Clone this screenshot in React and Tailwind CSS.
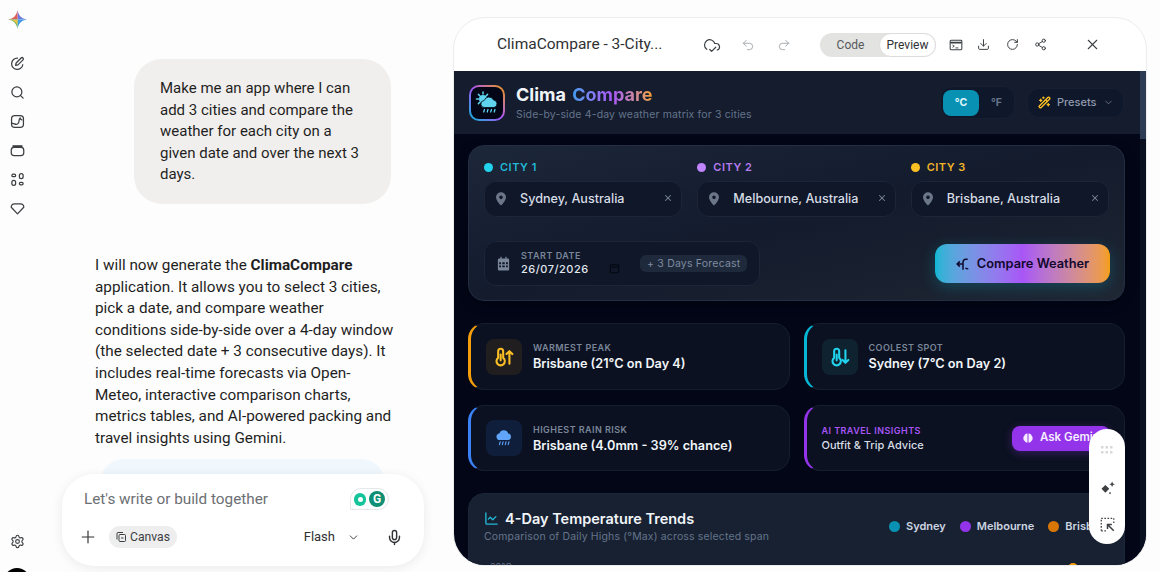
import { CloudCheck, Undo2, Redo2, Download, RotateCw, Share2, X, ChevronDown, Plus, Mic, Settings, Search, ChartLine, WandSparkles } from "lucide-react"

const Pin = ({ className }) => (
  <svg viewBox="0 0 24 24" className={className} fill="currentColor">
    <path fillRule="evenodd" d="M12 2a7.500 7.500 0 0 0-7.500 7.500C4.500 14.800 12 22 12 22s7.500-7.200 7.500-12.500A7.500 7.500 0 0 0 12 2zm0 10.200a2.700 2.700 0 1 1 0-5.400 2.700 2.700 0 0 1 0 5.400z" />
  </svg>
)

const RainCloud = ({ className }) => (
  <svg viewBox="0 0 24 24" className={className} fill="currentColor">
    <path d="M7 14.500a4 4 0 0 1-.5-7.970A5.500 5.500 0 0 1 17 6.600a4 4 0 0 1 0 7.900z" />
    <path d="M7.500 16.500 6.500 20M11 16.500 10 20M14.500 16.500 13.500 20M18 16.500 17 20" stroke="currentColor" strokeWidth="1.300" strokeLinecap="round" fill="none" />
  </svg>
)

const SunCloud = ({ className }) => (
  <svg viewBox="0 0 24 24" className={className} fill="currentColor">
    <circle cx="8" cy="8" r="4" />
    <path d="M8 1v2M1.500 8h2M3.400 3.400l1.400 1.400M12.600 3.400l-1.400 1.400M3.400 12.600l1.400-1.400" stroke="currentColor" strokeWidth="1.500" strokeLinecap="round" />
    <path d="M9.500 16.500a3.500 3.500 0 0 1-.3-7A5 5 0 0 1 18.500 9a3.800 3.800 0 0 1 .5 7.500z" stroke="#020617" strokeWidth="0.800" />
    <path d="M9.500 18.500 8.700 21M13 18.500 12.200 21M16.500 18.500 15.700 21M20 18.500 19.200 21" stroke="currentColor" strokeWidth="1.300" strokeLinecap="round" fill="none" />
  </svg>
)

const ThermoArrow = ({ className, down }) => (
  <svg viewBox="0 0 24 24" className={className} fill="none" stroke="currentColor" strokeWidth="2.500" strokeLinecap="round" strokeLinejoin="round">
    <path d="M5 5a3 3 0 0 1 6 0v8a5 5 0 1 1-6 0z" />
    <path d="M8 9v7" />
    {down ? <path d="M18.500 4v15M15 15.500l3.500 3.500 3.500-3.500" /> : <path d="M18.500 20V5M15 8.500 18.500 5 22 8.500" />}
  </svg>
)

const Brain = ({ className }) => (
  <svg viewBox="0 0 24 24" className={className} fill="currentColor">
    <path d="M11 3v18c-3 .500-5-1-5.500-3C3.500 17 2.500 15 3 13c-.800-2 0-4 1.500-5C5 5 8 2.500 11 3zM13 3c3-.500 6 2 6.500 5 1.500 1 2.300 3 1.500 5 .500 2-.500 4-2.500 5-.500 2-2.500 3.500-5.500 3z" />
  </svg>
)

const StatCard = ({ border, iconBg, icon, label, value }) => (
  <div className={`h-full rounded-2xl border border-l-[3px] border-[#161d2e] ${border} bg-[#0b1120] flex items-center pl-[15px] gap-[11px]`}>
    <div className={`w-9 h-9 rounded-lg flex items-center justify-center ${iconBg}`}>{icon}</div>
    <div className="pt-[1px]">
      <div className="text-[9px] leading-[14px] font-semibold tracking-[0.45px] text-[#7a8699]">{label}</div>
      <div className="text-[12.700px] leading-[18px] font-semibold text-[#f1f5f9]">{value}</div>
    </div>
  </div>
)

const CityField = ({ label, dot, labelColor, city }) => (
  <div>
    <div className="flex items-center gap-[7px] h-[14px] mb-[7px]">
      <span className={`w-[9px] h-[9px] rounded-full ${dot}`} />
      <span className={`text-[11px] font-semibold tracking-[0.5px] ${labelColor}`}>{label}</span>
    </div>
    <div className="h-9 rounded-xl border border-[#1c2638] bg-[#0f1728] flex items-center pl-[8px] pr-[8px]">
      <Pin className="w-4 h-4 text-[#6b7688]" />
      <span className="ml-[11px] pt-[1px] text-[12.600px] font-medium text-[#d7dde6] flex-1">{city}</span>
      <X className="w-[10px] h-[10px] text-[#7a8699] -mt-[3px]" strokeWidth={2.500} />
    </div>
  </div>
)

const SideIcon = ({ children }) => (
  <div className="h-[29px] flex items-center justify-center text-[#3c3e41]">{children}</div>
)

export default function App() {
  return (
    <div className="w-[1160px] h-[572px] overflow-hidden flex bg-[#fdfdfd] font-['Inter',sans-serif]">
      {/* nav rail */}
      <div className="w-[34px] shrink-0 flex flex-col items-center pt-[10px]">
        <svg viewBox="0 0 24 24" className="w-[19px] h-[19px]">
          <path d="M12 0c1 6.500 5 11 12 12H12z" fill="#6f79dc" />
          <path d="M12 0c-1 6.500-5 11-12 12h12z" fill="#dd5f5c" />
          <path d="M24 12c-7 1-11 5.500-12 12V12z" fill="#3f9de8" />
          <path d="M0 12c7 1 11 5.500 12 12V12z" fill="#6fbb5e" />
          <path d="M5 12.500h7V19c-1.500-2.800-3.500-5-7-6.500z" fill="#e8c240" />
        </svg>
        <div className="mt-[20px] flex flex-col">
          <SideIcon>
            <svg viewBox="0 0 24 24" className="w-[15px] h-[15px]" fill="none" stroke="currentColor" strokeWidth="2" strokeLinecap="round" strokeLinejoin="round">
              <path d="M12 3.500a9 9 0 1 0 8.500 10.500" />
              <path d="M9 15l.8-3.800 8-8a2.100 2.100 0 0 1 3 3l-8 8z" />
            </svg>
          </SideIcon>
          <SideIcon><Search className="w-[15px] h-[15px]" strokeWidth={2} /></SideIcon>
          <SideIcon>
            <svg viewBox="0 0 24 24" className="w-[15px] h-[15px]" fill="none" stroke="currentColor" strokeWidth="2" strokeLinecap="round">
              <rect x="2.500" y="2.500" width="19" height="19" rx="5" />
              <path d="M3 15c4-1 5 3 9 1 4-2 1-6 4-9.500 1 3 3 3 3 3" />
            </svg>
          </SideIcon>
          <SideIcon>
            <svg viewBox="0 0 24 24" className="w-[15px] h-[15px]" fill="none" stroke="currentColor" strokeWidth="2">
              <rect x="2" y="7" width="20" height="13" rx="4.500" />
              <path d="M5 7V4.500h14V7z" fill="currentColor" />
            </svg>
          </SideIcon>
          <SideIcon>
            <svg viewBox="0 0 24 24" className="w-[15px] h-[15px]" fill="none" stroke="currentColor" strokeWidth="2">
              <rect x="3" y="3.500" width="6" height="4" rx="2" />
              <rect x="15" y="2.500" width="6" height="8" rx="3" />
              <rect x="3" y="13.500" width="6" height="8" rx="3" />
              <rect x="15" y="16.500" width="6" height="4" rx="2" />
            </svg>
          </SideIcon>
          <SideIcon>
            <svg viewBox="0 0 24 24" className="w-[15px] h-[15px]" fill="none" stroke="currentColor" strokeWidth="2" strokeLinejoin="round">
              <path d="M7 4.500h10c3 0 5.500 3 5 5.500L12 20.500 2 10c-.500-2.500 2-5.500 5-5.500z" />
            </svg>
          </SideIcon>
        </div>
        <div className="mt-auto flex flex-col items-center">
          <Settings className="w-[15px] h-[15px] text-[#3c3e41]" strokeWidth={1.800} />
          <div className="w-[26px] h-[26px] rounded-full bg-black mt-[19px] -mb-[22px]" />
        </div>
      </div>

      {/* chat column */}
      <div className="w-[419px] shrink-0 flex flex-col font-['Roboto',sans-serif] text-[#1f1f1f]">
        <div className="h-[474px] overflow-hidden pt-[59px] pl-[61px]">
          <div className="ml-[39px] w-[257px] h-[145px] rounded-[28px] bg-[#f1efed] pl-[26px] pr-[24px] pt-[19px] text-[15px] leading-[21.6px]">
            Make me an app where I can add 3 cities and compare the weather for each city on a given date and over the next 3 days.
          </div>
          <div className="mt-[51px] w-[310px] text-[15.300px] leading-[21.6px]">
            I will now generate the <b className="font-bold">ClimaCompare</b><br />
            application. It allows you to select 3 cities,<br />
            pick a date, and compare weather<br />
            conditions side-by-side over a 4-day window<br />
            (the selected date + 3 consecutive days). It<br />
            includes real-time forecasts via Open-<br />
            Meteo, interactive comparison charts,<br />
            metrics tables, and AI-powered packing and<br />
            travel insights using Gemini.
          </div>
          <div className="mt-[10px] ml-[5px] w-[285px] h-10 rounded-t-[24px] bg-[#f0f7fd]" />
        </div>
        <div className="ml-[28px] w-[362px] h-[92px] rounded-[32px] bg-white shadow-[0_2px_12px_rgba(0,0,0,0.08)] relative flex flex-col">
          <div className="h-[50px] flex items-center pl-[22px] text-[15.300px] text-[#6c6f73]">Let's write or build together</div>
          <div className="absolute left-[288px] top-[14px] w-[39px] h-[22px] rounded-[11px] rounded-bl-none border border-[#e4e8e8] bg-white flex items-center justify-center gap-[3px]">
            <span className="w-[12px] h-[13px] rounded-full bg-[#15c39a] flex items-center justify-center"><span className="w-[5px] h-[5px] rounded-full bg-white" /></span>
            <span className="w-[16px] h-[16px] rounded-full bg-[#0f8f73] flex items-center justify-center text-white text-[12px] font-bold leading-none">G</span>
          </div>
          <div className="flex-1 flex items-center pl-[16px] pr-[21px] pb-[16px]">
            <Plus className="w-[20px] h-[20px] text-[#2f3133]" strokeWidth={1.400} />
            <div className="ml-[11px] h-[22px] pl-[6px] pr-[7px] rounded-full bg-[#eeeeee] flex items-center gap-[3px] text-[12.200px] text-[#3c4043]">
              <svg viewBox="0 0 24 24" className="w-[12px] h-[12px]" fill="none" stroke="currentColor" strokeWidth="2">
                <path d="M4 17V5a2 2 0 0 1 2-2h10" />
                <rect x="8" y="7" width="13" height="14" rx="2" />
                <path d="M12 14h5" />
              </svg>
              Canvas
            </div>
            <span className="ml-auto text-[13px] text-[#2f3133]">Flash</span>
            <ChevronDown className="ml-[12px] w-[13px] h-[13px] text-[#3c4043]" strokeWidth={1.800} />
            <Mic className="ml-[26px] w-[17px] h-[17px] text-[#2f3133]" strokeWidth={2} />
          </div>
        </div>
      </div>

      {/* canvas panel */}
      <div className="w-[694px] h-[549px] mt-[17px] relative">
        <div className="w-full h-full rounded-[32px] border border-[#ececec] bg-white overflow-hidden flex flex-col">
          <div className="h-[53px] shrink-0 flex items-center text-[#3c4043] pl-[43px]">
            <span className="text-[15.500px] font-['Roboto',sans-serif] text-[#2f3133] w-[191px]">ClimaCompare - 3-City...</span>
            <CloudCheck className="ml-[15px] w-[18px] h-[18px]" strokeWidth={1.600} />
            <Undo2 className="ml-[20px] w-[14px] h-[14px] text-[#a3a6aa]" strokeWidth={1.600} />
            <Redo2 className="ml-[22px] w-[14px] h-[14px] text-[#a3a6aa]" strokeWidth={1.600} />
            <div className="ml-[29px] w-[116px] h-[24px] rounded-full bg-[#e3e3e1] flex items-center text-[12px] font-['Roboto',sans-serif]">
              <span className="w-[59px] text-center text-[#55585c] pl-[2px]">Code</span>
              <span className="w-[57px] h-[24px] rounded-full bg-white border border-[#dcdcdc] flex items-center justify-center text-[#2f3133]">Preview</span>
            </div>
            <svg viewBox="0 0 24 24" className="ml-[13px] w-[14px] h-[14px]" fill="none" stroke="currentColor" strokeWidth="1.800">
              <rect x="2" y="4" width="20" height="16" rx="1.500" />
              <path d="M2 8h20" strokeWidth="3" />
              <path d="M6 12l3 2-3 2M11 17h5" strokeWidth="1.600" />
            </svg>
            <Download className="ml-[14px] w-[13px] h-[13px]" strokeWidth={1.800} />
            <RotateCw className="ml-[16px] w-[13px] h-[13px]" strokeWidth={1.800} />
            <Share2 className="ml-[15px] w-[13px] h-[13px]" strokeWidth={1.800} />
            <X className="ml-[37px] w-[17px] h-[17px]" strokeWidth={1.500} />
          </div>

          {/* preview */}
          <div className="flex-1 min-h-0 flex bg-[#020617] overflow-hidden">
            <div className="flex-1 min-w-0">
              <div className="h-[63px] bg-[#141c2e] flex items-center pl-[15px] pr-[16px]">
                <div className="w-9 h-9 rounded-[10px] p-[2px] bg-[linear-gradient(45deg,#06b6d4,#a855f7_50%,#f59e0b)]">
                  <div className="w-full h-full rounded-lg bg-[#020617] flex items-center justify-center">
                    <SunCloud className="w-[24px] h-[24px] text-[#5fd4ee]" />
                  </div>
                </div>
                <div className="ml-[11px]">
                  <div className="text-[18px] leading-[24px] font-bold text-[#f1f5f9]">
                    Clima <span className="ml-[2px] text-transparent bg-clip-text bg-gradient-to-r from-[#3b9df0] via-[#a855f7] to-[#f59e0b]">Compare</span>
                  </div>
                  <div className="text-[10.500px] leading-[15px] tracking-[0.15px] text-[#64748b]">Side-by-side 4-day weather matrix for 3 cities</div>
                </div>
                <div className="ml-auto w-[75px] h-[33px] rounded-xl bg-[#0f172a] border border-[#172033] flex items-center pl-[2px] text-[10.500px] font-bold">
                  <span className="w-9 h-[26px] rounded-lg bg-[#0891b2] flex items-center justify-center text-[#dff6fb]">°C</span>
                  <span className="flex-1 text-center text-[#64748b]">°F</span>
                </div>
                <div className="ml-3 w-[97px] h-[30px] rounded-xl bg-[#0f172a] border border-[#172033] flex items-center pl-[10px] gap-[6px] text-[11px] font-medium text-[#8f9bad]">
                  <WandSparkles className="w-[13px] h-[13px] text-[#fbbf24]" strokeWidth={2.500} />
                  Presets
                  <ChevronDown className="w-[11px] h-[11px] text-[#64748b]" strokeWidth={2} />
                </div>
              </div>

              <div className="pl-[14px] pr-[15px] pt-[11px] flex flex-col">
                <div className="h-[156px] rounded-2xl border border-[#232e42] bg-gradient-to-br from-[#1c2739] via-[#131b2d] to-[#1f2733] px-[15px] pt-[14px] shadow-[0_4px_12px_rgba(0,0,0,0.3)]">
                  <div className="grid grid-cols-3 gap-[15px]">
                    <CityField label="CITY 1" dot="bg-[#22d3ee]" labelColor="text-[#22b8d6]" city="Sydney, Australia" />
                    <CityField label="CITY 2" dot="bg-[#c084fc]" labelColor="text-[#b57cf0]" city="Melbourne, Australia" />
                    <CityField label="CITY 3" dot="bg-[#fbbf24]" labelColor="text-[#f0b429]" city="Brisbane, Australia" />
                  </div>
                  <div className="mt-[24px] flex items-center justify-between">
                    <div className="w-[276px] h-[45px] rounded-xl border border-[#1c2638] bg-[#0f1728] flex items-center pl-[11px]">
                      <svg viewBox="0 0 24 24" className="w-[15px] h-[15px] text-[#7a8699]" fill="currentColor">
                        <path fillRule="evenodd" d="M7 1h2v3h6V1h2v3h2a2 2 0 0 1 2 2v15a2 2 0 0 1-2 2H5a2 2 0 0 1-2-2V6a2 2 0 0 1 2-2h2zM5 10v3h3v-3zm5 0v3h4v-3zm6 0v3h3v-3zM5 15v3h3v-3zm5 0v3h4v-3zm6 0v3h3v-3z" />
                      </svg>
                      <div className="ml-[10px] w-[88px]">
                        <div className="text-[9px] leading-[12px] font-semibold tracking-[0.5px] text-[#7a8699]">START DATE</div>
                        <div className="text-[11px] leading-[15px] font-medium tracking-[0.5px] text-[#e2e8f0]">26/07/2026</div>
                      </div>
                      <svg viewBox="0 0 24 24" className="mt-[9px] w-[11px] h-[11px] text-[#050a14]" fill="none" stroke="currentColor" strokeWidth="2.500">
                        <rect x="3" y="4" width="18" height="17" rx="1" />
                        <path d="M3 9h18" />
                      </svg>
                      <div className="ml-[20px] h-[17px] px-[7px] rounded-md bg-[#1e293b] flex items-center text-[10.500px] tracking-[0.2px] text-[#7f8ba0]">+ 3 Days Forecast</div>
                    </div>
                    <div className="w-[175px] h-[39px] -mr-px rounded-xl bg-gradient-to-r from-[#06b6d4] via-[#a855f7] to-[#f59e0b] flex items-center justify-center gap-[7px] text-[12.800px] font-semibold text-[#12082e] shadow-[0_4px_14px_rgba(6,182,212,0.25)]">
                      <svg viewBox="0 0 24 24" className="w-[14px] h-[14px]" fill="none" stroke="currentColor" strokeWidth="2.600">
                        <path d="M2 12h10M6.500 7.500 2 12l4.500 4.500" />
                        <path d="M12 22V9c0-3 2-5 5-5h3M16 19c2 1 4 1 5 1" />
                      </svg>
                      Compare Weather
                    </div>
                  </div>
                </div>

                <div className="mt-[22px] grid grid-cols-2 grid-rows-[67px_66px] gap-x-[14px] gap-y-[15px]">
                  <StatCard border="border-l-[#f59e0b]" iconBg="bg-[#211e20]" label="WARMEST PEAK" value="Brisbane (21°C on Day 4)" icon={<ThermoArrow className="w-[20px] h-[20px] text-[#fbbf24]" />} />
                  <StatCard border="border-l-[#06b6d4]" iconBg="bg-[#0e2230]" label="COOLEST SPOT" value="Sydney (7°C on Day 2)" icon={<ThermoArrow down className="w-[20px] h-[20px] text-[#22d3ee]" />} />
                  <StatCard border="border-l-[#3b82f6]" iconBg="bg-[#0f1e3a]" label="HIGHEST RAIN RISK" value="Brisbane (4.0mm - 39% chance)" icon={<RainCloud className="w-[20px] h-[20px] text-[#60a5fa]" />} />
                  <div className="h-full rounded-2xl border border-l-[3px] border-[#161d2e] border-l-[#9333ea] bg-[#0b1120] flex items-center pl-[15px] pr-[14px] justify-between">
                    <div>
                      <div className="text-[9px] leading-[14px] font-semibold tracking-[0.45px] text-[#a855f7]">AI TRAVEL INSIGHTS</div>
                      <div className="text-[11px] leading-[15px] font-medium text-[#d7dde6]">Outfit &amp; Trip Advice</div>
                    </div>
                    <div className="w-[98px] h-[25px] rounded-lg bg-[#9333ea] flex items-center pl-[10px] gap-[6px] text-[11.500px] font-semibold text-[#f5edff] shadow-[0_2px_10px_rgba(147,51,234,0.35)]">
                      <Brain className="w-[12px] h-[12px]" />
                      Ask Gemini
                    </div>
                  </div>
                </div>

                <div className="mt-[22px] h-[120px] rounded-2xl border border-[#1c2638] bg-[#182131] pl-[15px] pr-[15px] pt-[14px]">
                  <div className="flex justify-between">
                    <div>
                      <div className="flex items-center gap-[6px] text-[14.500px] leading-[21px] font-semibold text-[#f1f5f9]">
                        <ChartLine className="w-[15px] h-[15px] text-[#22b8d6]" strokeWidth={2.200} />
                        4-Day Temperature Trends
                      </div>
                      <div className="text-[10.500px] leading-[15px] tracking-[0.15px] text-[#64748b]">Comparison of Daily Highs (°Max) across selected span</div>
                    </div>
                    <div className="flex items-center gap-[14px] text-[11px] font-semibold text-[#cbd5e1] h-[30px] mt-[3px] w-[235px] -mr-[15px] whitespace-nowrap">
                      <span className="flex items-center gap-[6px]"><i className="w-[11px] h-[11px] rounded-full bg-[#0891b2]" />Sydney</span>
                      <span className="flex items-center gap-[6px]"><i className="w-[11px] h-[11px] rounded-full bg-[#9333ea]" />Melbourne</span>
                      <span className="flex items-center gap-[6px]"><i className="w-[11px] h-[11px] rounded-full bg-[#d97706]" />Brisbane</span>
                    </div>
                  </div>
                  <div className="mt-[17px] flex justify-between items-start pr-[31px]">
                    <span className="text-[9px] leading-[12px] text-[#64748b] pl-[6px]">30°C</span>
                    <i className="mt-[2px] w-[10px] h-[10px] rounded-full bg-[#f59e0b]" />
                  </div>
                </div>
              </div>
            </div>
            <div className="w-[6px] shrink-0 bg-[#0a1020]">
              <div className="h-[68px] bg-[#2d3c55]" />
            </div>
          </div>
        </div>

        {/* floating tool pill */}
        <div className="absolute left-[636px] top-[412px] w-9 h-[115px] rounded-full bg-white flex flex-col items-center pt-[17px] text-[#3c4043]">
          <svg viewBox="0 0 12 9" className="w-[12px] h-[9px] text-[#d9d9d9]" fill="currentColor">
            <rect x="0" y="0" width="2.500" height="2.500" /><rect x="4.500" y="0" width="2.500" height="2.500" /><rect x="9" y="0" width="2.500" height="2.500" />
            <rect x="0" y="5" width="2.500" height="2.500" /><rect x="4.500" y="5" width="2.500" height="2.500" /><rect x="9" y="5" width="2.500" height="2.500" />
          </svg>
          <svg viewBox="0 0 24 24" className="mt-[25px] w-[17px] h-[17px]" fill="currentColor">
            <path d="M9 7l5.500 5.500L9 18l-5.500-5.500z" />
            <path d="M18.500 2l1.200 2.800L22.500 6l-2.800 1.200L18.500 10l-1.200-2.800L14.500 6l2.800-1.200z" />
            <path d="M15.500 17l1.500 1.500-1.500 1.500-1.500-1.500z" />
          </svg>
          <svg viewBox="0 0 24 24" className="mt-[20px] w-[15px] h-[15px]" fill="none" stroke="currentColor" strokeWidth="2">
            <path d="M2 22V2h20v10" strokeDasharray="2.500 2.500" />
            <path d="M2 22h9" strokeDasharray="2.500 2.500" />
            <path d="M22 22 12 12M12 19v-7h7" strokeWidth="2.400" />
          </svg>
        </div>
      </div>
    </div>
  )
}
